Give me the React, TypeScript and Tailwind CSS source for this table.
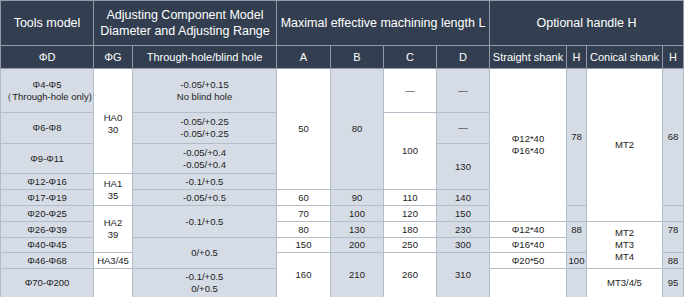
import React from "react";

const G = "bg-[#d6dce5]";
const W = "bg-white";
const bd = "border border-[#b3bccb]";

function C({
  children,
  bg = G,
  rs,
  cs,
  extra = "",
}: {
  children?: React.ReactNode;
  bg?: string;
  rs?: number;
  cs?: number;
  extra?: string;
}) {
  return (
    <td rowSpan={rs} colSpan={cs} className={`${bd} ${bg} p-0 text-center align-middle ${extra}`}>
      {children}
    </td>
  );
}

const H = ({ children, cs, extra = "" }: { children: React.ReactNode; cs?: number; extra?: string }) => (
  <th colSpan={cs} className={`border border-[#8f99a8] bg-[#333f50] p-0 text-center align-middle font-normal text-white ${extra}`}>
    {children}
  </th>
);

export default function App() {
  return (
    <div className="w-[687px] h-[297px] overflow-hidden bg-white">
      <table
        className="table-fixed border-collapse w-[683px] text-[#222] text-[9.5px] leading-[12px]"
        style={{ fontFamily: '"Liberation Sans", Arial, sans-serif' }}
      >
        <colgroup>
          <col className="w-[93px]" />
          <col className="w-[39px]" />
          <col className="w-[144px]" />
          <col className="w-[54px]" />
          <col className="w-[53px]" />
          <col className="w-[53px]" />
          <col className="w-[53px]" />
          <col className="w-[77px]" />
          <col className="w-[20px]" />
          <col className="w-[76px]" />
          <col className="w-[21px]" />
        </colgroup>
        <thead>
          <tr className="h-[45px] text-[12.5px] leading-[16px]">
            <H>Tools model</H>
            <H cs={2}>
              Adjusting Component Model
              <br />
              Diameter and Adjusting Range
            </H>
            <H cs={4}>Maximal effective machining length L</H>
            <H cs={4}>Optional handle H</H>
          </tr>
          <tr className="h-[23px] text-[11px] leading-[14px]">
            <H>ΦD</H>
            <H>ΦG</H>
            <H>Through-hole/blind hole</H>
            <H>A</H>
            <H>B</H>
            <H>C</H>
            <H>D</H>
            <H extra="whitespace-nowrap">Straight shank</H>
            <H>H</H>
            <H extra="whitespace-nowrap">Conical shank</H>
            <H>H</H>
          </tr>
        </thead>
        <tbody>
          <tr className="h-[44px]">
            <C>
              Φ4-Φ5
              <br />
              （Through-hole only)
            </C>
            <C bg={W} rs={3} extra="pt-[6px]">
              HA0
              <br />
              30
            </C>
            <C>
              -0.05/+0.15
              <br />
              No blind hole
            </C>
            <C bg={W} rs={4}>50</C>
            <C rs={4}>80</C>
            <C bg={W}>—</C>
            <C>—</C>
            <C bg={W} rs={6}>
              Φ12*40
              <br />
              Φ16*40
            </C>
            <C rs={5}>78</C>
            <C bg={W} rs={6}>MT2</C>
            <C rs={5}>68</C>
          </tr>
          <tr className="h-[31px]">
            <C>Φ6-Φ8</C>
            <C>
              -0.05/+0.25
              <br />
              -0.05/+0.25
            </C>
            <C bg={W} rs={3}>100</C>
            <C>—</C>
          </tr>
          <tr className="h-[30px]">
            <C>Φ9-Φ11</C>
            <C>
              -0.05/+0.4
              <br />
              -0.05/+0.4
            </C>
            <C rs={2}>130</C>
          </tr>
          <tr className="h-[16px]">
            <C>Φ12-Φ16</C>
            <C bg={W} rs={2}>
              HA1
              <br />
              35
            </C>
            <C>-0.1/+0.5</C>
          </tr>
          <tr className="h-[16px]">
            <C>Φ17-Φ19</C>
            <C>-0.05/+0.5</C>
            <C bg={W}>60</C>
            <C>90</C>
            <C bg={W}>110</C>
            <C>140</C>
          </tr>
          <tr className="h-[16px]">
            <C>Φ20-Φ25</C>
            <C bg={W} rs={3}>
              HA2
              <br />
              39
            </C>
            <C rs={2}>-0.1/+0.5</C>
            <C bg={W}>70</C>
            <C>100</C>
            <C bg={W}>120</C>
            <C>150</C>
            <C />
            <C />
          </tr>
          <tr className="h-[16px]">
            <C>Φ26-Φ39</C>
            <C bg={W}>80</C>
            <C>130</C>
            <C bg={W}>180</C>
            <C>230</C>
            <C bg={W}>Φ12*40</C>
            <C rs={2} extra="!align-top pt-[2px]">88</C>
            <C bg={W} rs={3}>
              MT2
              <br />
              MT3
              <br />
              MT4
            </C>
            <C rs={2} extra="!align-top pt-[2px]">78</C>
          </tr>
          <tr className="h-[15px]">
            <C>Φ40-Φ45</C>
            <C rs={2}>0/+0.5</C>
            <C bg={W}>150</C>
            <C>200</C>
            <C bg={W}>250</C>
            <C>300</C>
            <C bg={W}>Φ16*40</C>
          </tr>
          <tr className="h-[16px]">
            <C>Φ46-Φ68</C>
            <C bg={W}>HA3/45</C>
            <C bg={W} rs={2}>160</C>
            <C rs={2}>210</C>
            <C bg={W} rs={2}>260</C>
            <C rs={2}>310</C>
            <C bg={W}>Φ20*50</C>
            <C>100</C>
            <C>88</C>
          </tr>
          <tr className="h-[29px]">
            <C>Φ70-Φ200</C>
            <C bg={W} />
            <C>
              -0.1/+0.5
              <br />
              0/+0.5
            </C>
            <C bg={W} />
            <C />
            <C bg={W}>MT3/4/5</C>
            <C>95</C>
          </tr>
        </tbody>
      </table>
    </div>
  );
}
